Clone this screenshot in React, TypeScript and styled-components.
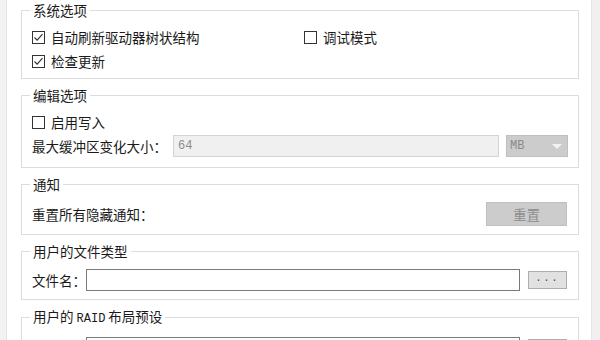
import React from 'react';
import styled, { createGlobalStyle } from 'styled-components';

const GlobalStyle = createGlobalStyle`
  html, body {
    margin: 0;
    padding: 0;
    background: #ffffff;
  }
  body {
    font-family: "Noto Sans CJK SC", "Noto Sans", sans-serif;
    font-size: 13.5px;
    color: #1a1a1a;
  }
`;

export default function App() {
  return (
    <>
      <GlobalStyle />
      <Window>
        <LeftEdge />
        <Content>
          <Group>
            <Legend>系统选项</Legend>
            <OptionGrid>
              <CheckItem checked label="自动刷新驱动器树状结构" />
              <CheckItem label="调试模式" />
              <CheckItem checked label="检查更新" />
            </OptionGrid>
          </Group>

          <Group>
            <Legend>编辑选项</Legend>
            <Rows>
              <CheckItem label="启用写入" />
              <FieldRow>
                <Label width={141}>最大缓冲区变化大小：</Label>
                <TextBox disabled value="64" readOnly />
                <Select>
                  <span>MB</span>
                  <Arrow />
                </Select>
              </FieldRow>
            </Rows>
          </Group>

          <Group pad={9}>
            <Legend>通知</Legend>
            <FieldRow>
              <Label>重置所有隐藏通知：</Label>
              <Spacer />
              <ResetButton>重置</ResetButton>
            </FieldRow>
          </Group>

          <Group pad={9}>
            <Legend>用户的文件类型</Legend>
            <FieldRow>
              <Label width={54}>文件名：</Label>
              <TextBox />
              <BrowseButton>...</BrowseButton>
            </FieldRow>
          </Group>

          <Group pad={9}>
            <Legend>
              用户的 <Mono>RAID</Mono> 布局预设
            </Legend>
            <FieldRow>
              {/* row continues below the visible area */}
              <Label width={54} />
              <TextBox />
              <BrowseButton />
            </FieldRow>
          </Group>
        </Content>
        <ScrollTrack />
      </Window>
    </>
  );
}

function CheckItem({ checked, label }: { checked?: boolean; label: string }) {
  return (
    <Check>
      <Box>
        {checked && (
          <svg width="11" height="11" viewBox="0 0 11 11">
            <path d="M1.5 5.5 L4.2 8.2 L9.5 2.2" fill="none" stroke="#333" strokeWidth="1.2" />
          </svg>
        )}
      </Box>
      <span>{label}</span>
    </Check>
  );
}

const Window = styled.div`
  display: flex;
  width: 600px;
  height: 340px;
  overflow: hidden;
`;

const LeftEdge = styled.div`
  width: 6px;
  flex: none;
  background: #f2f2f2;
  border-right: 1px solid #e2e2e2;
`;

const ScrollTrack = styled.div`
  width: 8px;
  flex: none;
  background: #f0f0f0;
  border-left: 1px solid #e6e6e6;
`;

const Content = styled.div`
  flex: 1;
  padding: 1px 12px 0 14px;
  display: flex;
  flex-direction: column;
  gap: 7px;
`;

const Group = styled.fieldset<{ pad?: number }>`
  margin: 0;
  border: 1px solid #dcdcdc;
  padding: ${(p) => p.pad ?? 6}px 10px ${(p) => (p.pad ?? 6) - 1}px 10px;
  min-width: 0;
`;

const Legend = styled.legend`
  padding: 0 3px;
  margin-left: -2px;
  line-height: 18px;
  white-space: pre;
`;

const Mono = styled.span`
  font-family: "Liberation Mono", monospace;
  font-size: 12px;
`;

const OptionGrid = styled.div`
  display: grid;
  grid-template-columns: 272px 1fr;
  grid-auto-rows: 24px;
`;

const Rows = styled.div`
  display: flex;
  flex-direction: column;
  gap: 1px;
  padding-bottom: 5px;
`;

const Check = styled.label`
  display: flex;
  align-items: center;
  gap: 6px;
  height: 24px;
  line-height: 18px;
`;

const Box = styled.span`
  width: 13px;
  height: 13px;
  box-sizing: border-box;
  border: 1px solid #333;
  background: #fff;
  display: flex;
  align-items: center;
  justify-content: center;
`;

const FieldRow = styled.div`
  display: flex;
  align-items: center;
  gap: 7px;
  min-height: 22px;
`;

const Label = styled.span<{ width?: number }>`
  flex: none;
  width: ${(p) => (p.width ? `${p.width - 7}px` : 'auto')};
  white-space: nowrap;
  line-height: 18px;
`;

const Spacer = styled.div`
  flex: 1;
`;

const TextBox = styled.input`
  flex: 1;
  min-width: 0;
  height: 22px;
  box-sizing: border-box;
  margin: 0;
  padding: 0 4px;
  font-family: "Liberation Mono", monospace;
  font-size: 12px;
  color: #8c8c8c;
  background: #fff;
  border: 1px solid #7a7a7a;
  outline: none;

  &:disabled {
    background: #f0f0f0;
    border-color: #d4d4d4;
  }
`;

const Select = styled.div`
  flex: none;
  width: 62px;
  height: 22px;
  box-sizing: border-box;
  background: #cccccc;
  border: 1px solid #bfbfbf;
  display: flex;
  align-items: center;
  justify-content: space-between;
  padding: 0 5px 0 3px;
  font-family: "Liberation Mono", monospace;
  font-size: 12px;
  color: #8a8a8a;
`;

const Arrow = styled.span`
  width: 0;
  height: 0;
  border-left: 5px solid transparent;
  border-right: 5px solid transparent;
  border-top: 5px solid #f2f2f2;
`;

const ResetButton = styled.button`
  flex: none;
  width: 81px;
  height: 24px;
  margin: 0 1px 0 0;
  padding: 0;
  background: #cccccc;
  border: 1px solid #bfbfbf;
  font-family: "Noto Sans CJK SC", sans-serif;
  font-size: 13.5px;
  color: #8c8c8c;
`;

const BrowseButton = styled.button`
  flex: none;
  width: 39px;
  height: 18px;
  margin: 0 1px 0 1px;
  padding: 0 0 4px;
  background: #e1e1e1;
  border: 1px solid #adadad;
  font-family: "Liberation Mono", monospace;
  font-size: 10px;
  letter-spacing: 2px;
  color: #444;
`;
